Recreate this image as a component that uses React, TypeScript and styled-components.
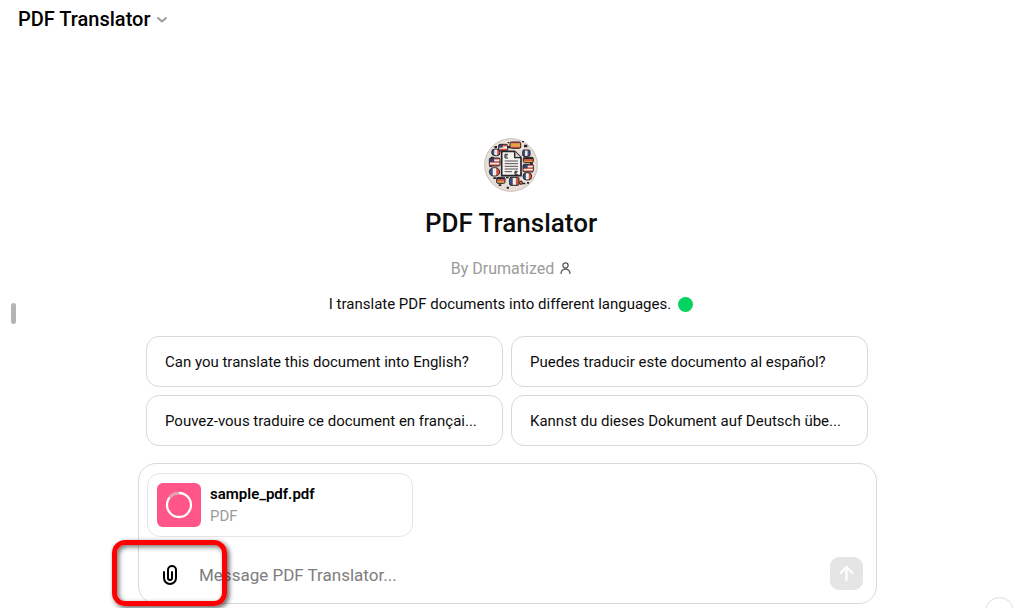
import React from "react";
import styled, { createGlobalStyle } from "styled-components";

const GlobalStyle = createGlobalStyle`
  *, *::before, *::after { box-sizing: border-box; }
  body {
    margin: 0;
    background: #fff;
    color: #0d0d0d;
    font-family: Roboto, "Liberation Sans", sans-serif;
    font-size: 15px;
    line-height: 24px;
  }
  button, input { font: inherit; color: inherit; }
  h1, p { margin: 0; }
`;

const Page = styled.div`
  position: relative;
  display: flex;
  flex-direction: column;
  min-height: 100vh;
  overflow: hidden;
`;

const Header = styled.header`
  display: flex;
  padding: 4px 18px;
`;

const ModelButton = styled.button`
  display: flex;
  align-items: center;
  gap: 6px;
  padding: 0;
  border: 0;
  background: none;
  font-size: 20px;
  line-height: 30px;
  font-weight: 500;
  color: #000;
`;

const SidebarHandle = styled.button`
  position: absolute;
  left: 11px;
  top: 303px;
  width: 5px;
  height: 21px;
  padding: 0;
  border: 0;
  border-radius: 3px;
  background: #b4b4b4;
`;

const Hero = styled.main`
  display: flex;
  flex-direction: column;
  align-items: center;
  padding: 100px 15px 20px 16px;
`;

const Title = styled.h1`
  margin-top: 13px;
  font-size: 26px;
  line-height: 36px;
  font-weight: 500;
`;

const Author = styled.p`
  display: flex;
  align-items: center;
  gap: 6px;
  margin-top: 16px;
  font-size: 16px;
  color: #9b9b9b;

  svg { margin-bottom: 3px; }
`;

const Description = styled.p`
  display: flex;
  align-items: center;
  gap: 7px;
  margin-top: 11px;
`;

const StatusDot = styled.span`
  width: 15px;
  height: 15px;
  border-radius: 50%;
  background: #04d361;
`;

const Lower = styled.section`
  display: flex;
  flex-direction: column;
  gap: 17px;
  width: 100%;
  max-width: 759px;
  margin: 0 auto;
  padding: 0 13px 4px 7px;
`;

const Prompts = styled.div`
  display: grid;
  grid-template-columns: 1fr 1fr;
  gap: 8px;
  padding: 0 9px 0 8px;
`;

const Prompt = styled.button`
  height: 51px;
  padding: 0 18px;
  overflow: hidden;
  border: 1px solid #d9d9d9;
  border-radius: 13px;
  background: #fff;
  text-align: left;
  text-overflow: ellipsis;
  white-space: nowrap;
`;

const Composer = styled.form`
  position: relative;
  padding: 9px 8px 0;
  border: 1px solid #d9d9d9;
  border-radius: 18px;
`;

const FileCard = styled.div`
  display: flex;
  align-items: center;
  gap: 9px;
  width: 266px;
  height: 64px;
  padding: 0 9px;
  border: 1px solid #e5e5e5;
  border-radius: 13px;
`;

const FileBadge = styled.div`
  display: grid;
  place-items: center;
  width: 44px;
  height: 44px;
  border-radius: 6px;
  background: #ff5588;
`;

const FileInfo = styled.div`
  line-height: 22px;
`;

const FileName = styled.div`
  font-weight: 600;
  color: #000;
`;

const FileType = styled.div`
  color: #9b9b9b;
`;

const InputRow = styled.div`
  display: flex;
  align-items: center;
  height: 66px;
  padding: 10px 5px 0 9px;
`;

const AttachButton = styled.button`
  display: grid;
  place-items: center;
  width: 28px;
  height: 34px;
  padding: 0;
  border: 0;
  background: none;
  color: #000;
`;

const MessageInput = styled.input`
  flex: 1;
  min-width: 0;
  margin-left: 15px;
  padding: 0;
  border: 0;
  outline: 0;
  background: none;
  font-size: 17px;
  &::placeholder { color: #7d7d7d; opacity: 1; }
`;

const SendButton = styled.button`
  display: grid;
  place-items: center;
  width: 33px;
  height: 33px;
  margin-bottom: 3px;
  padding: 0;
  border: 0;
  border-radius: 9px;
  background: #e5e5e5;
  color: #fff;
`;

const Highlight = styled.div`
  position: absolute;
  left: -27px;
  bottom: -3px;
  width: 115px;
  height: 66px;
  border: 5px solid #fe0000;
  border-radius: 13px;
  box-shadow: 2px 2px 5px rgba(0, 0, 0, 0.65), inset 2px 2px 5px rgba(0, 0, 0, 0.55);
  pointer-events: none;
`;

const HelpButton = styled.button`
  position: absolute;
  right: 7px;
  bottom: -18px;
  width: 29px;
  height: 29px;
  border: 1px solid #dedede;
  border-radius: 50%;
  background: #fff;
`;

type FlagProps = { x: number; y: number; w: number; h: number; colors: string[]; vertical?: boolean; round?: boolean; stars?: boolean };

const Flag = ({ x, y, w, h, colors, vertical, round, stars }: FlagProps) => {
  const id = `flag-${x}-${y}`;
  const rx = round ? Math.min(w, h) / 2 : 4;
  const n = colors.length;
  return (
    <g>
      <clipPath id={id}><rect x={x} y={y} width={w} height={h} rx={rx} /></clipPath>
      <g clipPath={`url(#${id})`}>
        {colors.map((c, i) => (
          <rect
            key={i}
            x={vertical ? x + (w * i) / n : x}
            y={vertical ? y : y + (h * i) / n}
            width={vertical ? w / n + 0.5 : w}
            height={vertical ? h : h / n + 0.5}
            fill={c}
          />
        ))}
        {stars && <rect x={x} y={y} width={w * 0.45} height={h * 0.5} fill="#33436e" />}
      </g>
      <rect x={x} y={y} width={w} height={h} rx={rx} fill="none" stroke="#25242b" strokeWidth="3" />
    </g>
  );
};

const red = "#d9503f";
const white = "#f4eee6";
const blue = "#34538c";
const gold = "#e8a13c";
const ink = "#25242b";

const Logo = () => (
  <svg width="54" height="54" viewBox="14 24 162 162" role="img" aria-label="PDF Translator logo">
    <circle cx="95" cy="105" r="79" fill="#e9dfd7" stroke="#c9bfb9" strokeWidth="3" />
    <g fill={ink}>
      <path d="M45 48h8v6h-8zM85 36h5v4h-5zM128 33h6v4h-6zM134 44h10v8h-10zM35 80h8v4h-8zM30 106h8v5h-8zM152 97h8v5h-8zM42 142h9v5h-9zM58 163h8v5h-8zM80 140h8v5h-8zM82 170h7v6h-7zM128 158h10v5h-10zM143 156h6v5h-6zM120 130h7v6h-7zM56 69h6v5h-6zM86 48h6v7h-6z" />
    </g>
    <Flag x={37} y={57} w={25} h={20} colors={[blue, white, red]} vertical round />
    <Flag x={58} y={43} w={27} h={20} colors={[red, white, red]} stars />
    <Flag x={92} y={36} w={32} h={19} colors={[red, gold, gold, red]} />
    <Flag x={130} y={60} w={22} h={19} colors={[blue, white, blue]} vertical />
    <Flag x={30} y={84} w={32} h={24} colors={[red, white, red, white, red]} stars />
    <Flag x={132} y={82} w={30} h={16} colors={[ink, red, gold]} />
    <Flag x={30} y={113} w={31} h={25} colors={[blue, white, red]} vertical round />
    <Flag x={131} y={103} w={31} h={23} colors={[red, white, red, white, red]} stars />
    <Flag x={131} y={128} w={26} h={22} colors={[blue, white, red]} vertical round />
    <Flag x={52} y={142} w={25} h={18} colors={[ink, red, gold]} />
    <Flag x={91} y={142} w={28} h={24} colors={[blue, white, red]} vertical />
    <Flag x={121} y={153} w={8} h={10} colors={[red, gold]} />
    <path d="M67 64h39l19 19v54H67z" fill="#f5f1ec" stroke={ink} strokeWidth="5" strokeLinejoin="round" />
    <path d="M106 64v19h19" fill="#d9d1ca" stroke={ink} strokeWidth="4" strokeLinejoin="round" />
    <path d="M76 93h40M76 101h40M76 109h40M76 117h40M76 125h22" stroke="#555259" strokeWidth="3" />
    <path d="M86 73h-9v11h9M77 78h7M115 124h-8v9h8M107 128h6" fill="none" stroke={ink} strokeWidth="3" />
  </svg>
);

const prompts = [
  "Can you translate this document into English?",
  "Puedes traducir este documento al español?",
  "Pouvez-vous traduire ce document en françai...",
  "Kannst du dieses Dokument auf Deutsch übe...",
];

export default function App() {
  return (
    <>
      <GlobalStyle />
      <Page>
        <Header>
          <ModelButton type="button">
            PDF Translator
            <svg width="12" height="12" viewBox="0 0 12 12" fill="none" stroke="#9b9b9b" strokeWidth="2" strokeLinecap="round" strokeLinejoin="round" aria-hidden="true">
              <path d="M2 5l4 3.500 4-3.500" />
            </svg>
          </ModelButton>
        </Header>
        <SidebarHandle type="button" aria-label="Open sidebar" />
        <Hero>
          <Logo />
          <Title>PDF Translator</Title>
          <Author>
            By Drumatized
            <svg width="11" height="12" viewBox="0 0 11 12" fill="none" stroke="#565656" strokeWidth="1.3" strokeLinecap="round" aria-hidden="true">
              <circle cx="5.5" cy="3.4" r="2.6" />
              <path d="M1 11.3C1.3 8.8 3 7.2 5.5 7.2s4.200 1.600 4.500 4.100" />
            </svg>
          </Author>
          <Description>
            I translate PDF documents into different languages.
            <StatusDot />
          </Description>
        </Hero>
        <Lower>
          <Prompts>
            {prompts.map((text) => (
              <Prompt type="button" key={text}>{text}</Prompt>
            ))}
          </Prompts>
          <Composer>
            <FileCard>
              <FileBadge>
                <svg width="28" height="28" viewBox="0 0 28 28" fill="none" strokeWidth="2.300" aria-hidden="true">
                  <circle cx="14" cy="14" r="12" stroke="#fff" />
                  <path d="M4.500 6.700A12 12 0 0 1 14 2" stroke="#d6a3b5" />
                </svg>
              </FileBadge>
              <FileInfo>
                <FileName>sample_pdf.pdf</FileName>
                <FileType>PDF</FileType>
              </FileInfo>
            </FileCard>
            <InputRow>
              <AttachButton type="button" aria-label="Attach files">
                <svg width="24" height="24" viewBox="0 0 24 24" fill="currentColor" aria-hidden="true">
                  <path fillRule="evenodd" clipRule="evenodd" d="M9 7a5 5 0 0 1 10 0v8a7 7 0 1 1-14 0V9a1 1 0 0 1 2 0v6a5 5 0 0 0 10 0V7a3 3 0 1 0-6 0v8a1 1 0 1 0 2 0V9a1 1 0 1 1 2 0v6a3 3 0 1 1-6 0z" />
                </svg>
              </AttachButton>
              <MessageInput aria-label="Message PDF Translator" placeholder="Message PDF Translator..." />
              <SendButton type="submit" aria-label="Send message">
                <svg width="15" height="17" viewBox="0 0 15 17" fill="none" stroke="currentColor" strokeWidth="2.200" strokeLinecap="round" strokeLinejoin="round" aria-hidden="true">
                  <path d="M7.500 15.500V2M1.500 8l6-6 6 6" />
                </svg>
              </SendButton>
            </InputRow>
            <Highlight />
          </Composer>
        </Lower>
        <HelpButton type="button" aria-label="Help" />
      </Page>
    </>
  );
}
